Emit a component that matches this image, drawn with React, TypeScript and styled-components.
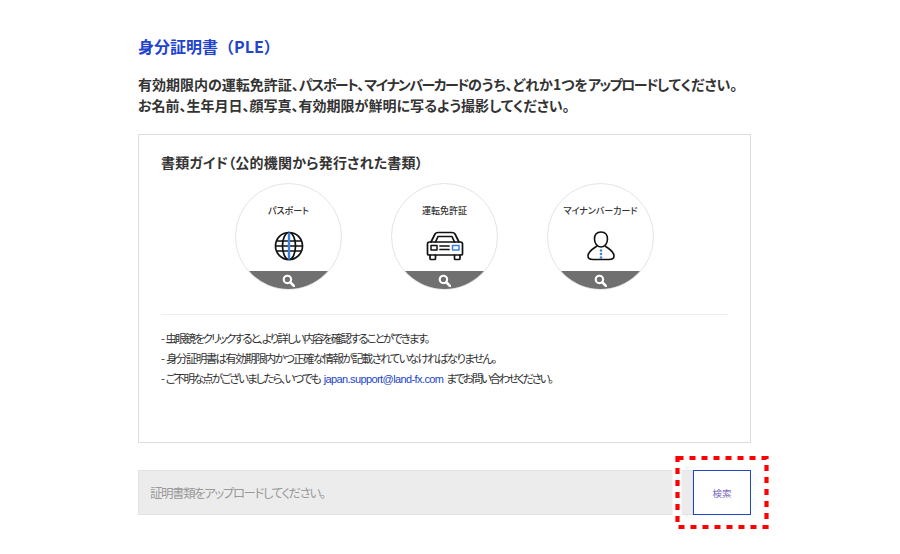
import React from "react";
import styled, { createGlobalStyle } from "styled-components";

const Global = createGlobalStyle`
  html, body { margin: 0; padding: 0; background: #fff; }
  body {
    font-family: "Noto Sans CJK JP", "Noto Sans", sans-serif;
    font-feature-settings: "palt";
  }
`;

const Page = styled.main`
  position: relative;
  width: 900px;
  height: 554px;
  box-sizing: border-box;
  padding: 35px 149px 0 138px;
  overflow: hidden;
`;
const Title = styled.h1`
  margin: 0;
  font-size: 16px;
  line-height: 23px;
  font-weight: 700;
  color: #2244cc;
  font-feature-settings: normal;
`;
const Lead = styled.p`
  margin: 16px 0 0;
  font-size: 14px;
  line-height: 21px;
  font-weight: 700;
  color: #333;
  white-space: nowrap;
`;
const Kata = styled.span`
  letter-spacing: -1.5px;
`;
const GuideBox = styled.section`
  margin-top: 18px;
  height: 309px;
  box-sizing: border-box;
  border: 1px solid #ddd;
  padding: 16px 22px 0;
`;
const GuideTitle = styled.h2`
  margin: 0;
  font-size: 14px;
  line-height: 22px;
  font-weight: 700;
  letter-spacing: 0.2px;
  color: #333;
`;
const Circles = styled.div`
  display: flex;
  justify-content: center;
  gap: 49px;
  margin-top: 10px;
  padding-bottom: 24px;
  border-bottom: 1px solid #eee;
`;
const Circle = styled.div`
  position: relative;
  width: 107px;
  height: 107px;
  box-sizing: border-box;
  border: 1px solid #e4e4e4;
  border-radius: 50%;
  overflow: hidden;
  display: flex;
  flex-direction: column;
  align-items: center;
`;
const CircleLabel = styled.span`
  margin-top: 20px;
  font-size: 9px;
  line-height: 14px;
  font-weight: 500;
  color: #333;
  white-space: nowrap;
`;
const IconWrap = styled.div`
  margin-top: 12px;
  height: 32px;
  display: flex;
  align-items: center;
  justify-content: center;
`;
const Band = styled.div`
  margin-top: auto;
  width: 100%;
  height: 18px;
  flex: none;
  background: #707070;
  display: flex;
  align-items: flex-start;
  justify-content: center;
  padding-top: 3px;
  box-sizing: border-box;
`;
const Notes = styled.ul`
  list-style: none;
  margin: 13px 0 0;
  padding: 0;
  font-size: 11.5px;
  line-height: 20px;
  color: #333;
  word-spacing: 2px;
  white-space: nowrap;
`;
const Note = styled.li<{ $spacing: number }>`
  letter-spacing: ${(p) => p.$spacing}px;
`;
const Mail = styled.span`
  color: #2244cc;
  font-family: "Liberation Sans", sans-serif;
  font-size: 11px;
  letter-spacing: -0.6px;
  margin: 0 3px 0 4px;
`;
const Tail = styled.span`
  letter-spacing: -2.3px;
`;
const UploadRow = styled.div`
  display: flex;
  align-items: stretch;
  margin-top: 27px;
  height: 45px;
`;
const Placeholder = styled.div`
  flex: 1;
  box-sizing: border-box;
  background: #ececec;
  border: 1px solid #e2e2e2;
  padding-left: 11px;
  font-size: 12.5px;
  line-height: 43px;
  color: #999;
  letter-spacing: -1.45px;
`;
const SearchButton = styled.button`
  width: 58px;
  box-sizing: border-box;
  background: #fff;
  border: 1px solid #2244cc;
  padding: 0;
  font-family: inherit;
  font-size: 9.5px;
  color: #7a6cc0;
`;
const Annotation = styled.svg`
  position: absolute;
  left: 670px;
  top: 450px;
`;

const Magnifier = () => (
  <svg width="13" height="13" viewBox="0 0 12 12" fill="none">
    <circle cx="5" cy="5" r="3.4" stroke="#fff" strokeWidth="2" />
    <path d="M7.6 7.6 L11 11" stroke="#fff" strokeWidth="2.4" strokeLinecap="round" />
  </svg>
);

const Globe = () => (
  <svg width="30" height="30" viewBox="0 0 30 30" fill="none" stroke="#111" strokeWidth="1.7">
    <circle cx="15" cy="15" r="13.5" />
    <ellipse cx="15" cy="15" rx="6.5" ry="13.5" />
    <path d="M2 10 H28 M2 20 H28 M1.5 15 H28.5" />
    <path d="M15 1.5 V28.5" stroke="#3b82e0" strokeWidth="2.4" />
  </svg>
);

const Car = () => (
  <svg width="38" height="30" viewBox="0 0 38 30" fill="none" stroke="#111" strokeWidth="1.7" strokeLinejoin="round" strokeLinecap="round">
    <path d="M5 11 L9 3 Q10 1.5 12 1.5 H26 Q28 1.5 29 3 L33 11" />
    <path d="M9.5 11 L12 5.5 H26 L28.5 11" />
    <path d="M3.5 11 H34.5 Q36.5 11 36.5 13 V23 Q36.5 24 35 24 H3 Q1.5 24 1.5 23 V13 Q1.5 11 3.5 11 Z" />
    <path d="M4 24 V27.5 Q4 28.5 5 28.5 H8.5 Q9.5 28.5 9.5 27.5 V24 M28.5 24 V27.5 Q28.5 28.5 29.5 28.5 H33 Q34 28.5 34 27.5 V24" />
    <rect x="5" y="14.5" width="6" height="4.5" strokeWidth="1.5" />
    <path d="M14 15 H23 M14 18.5 H23" />
    <rect x="26.5" y="14.5" width="6.5" height="4.5" stroke="#3b82e0" strokeWidth="1.5" />
  </svg>
);

const Person = () => (
  <svg width="28" height="30" viewBox="0 0 28 30" fill="none" stroke="#111" strokeWidth="1.6" strokeLinejoin="round">
    <path d="M14 1 C9.5 1 7.5 4 7.5 8 C7.5 12 10 16 14 16 C18 16 20.5 12 20.5 8 C20.5 4 18.5 1 14 1 Z" />
    <path d="M10 15 C6 18 1 20 1 25 C1 27.5 3 28.5 6 28.5 H22 C25 28.5 27 27.5 27 25 C27 20 22 18 18 15" />
    <g fill="#3b82e0" stroke="none">
      <circle cx="14" cy="19.5" r="1.3" />
      <circle cx="14" cy="23" r="1.3" />
      <circle cx="14" cy="26.5" r="1.3" />
    </g>
  </svg>
);

const guides = [
  { label: "パスポート", icon: <Globe /> },
  { label: "運転免許証", icon: <Car /> },
  { label: "マイナンバーカード", icon: <Person /> },
];

export default function App() {
  return (
    <Page>
      <Global />
      <Title>身分証明書（PLE）</Title>
      <Lead>
        有効期限内の運転免許証、<Kata>パスポート</Kata>、<Kata>マイナンバーカード</Kata>のうち、どれか1つを<Kata>アップロード</Kata>してください。
        <br />
        お名前、生年月日、顔写真、有効期限が鮮明に写るよう撮影してください。
      </Lead>
      <GuideBox>
        <GuideTitle>書類ガイド（公的機関から発行された書類）</GuideTitle>
        <Circles>
          {guides.map((g) => (
            <Circle key={g.label}>
              <CircleLabel>{g.label}</CircleLabel>
              <IconWrap>{g.icon}</IconWrap>
              <Band>
                <Magnifier />
              </Band>
            </Circle>
          ))}
        </Circles>
        <Notes>
          <Note $spacing={-2}>- 虫眼鏡をクリックすると、より詳しい内容を確認することができます。</Note>
          <Note $spacing={-1.65}>- 身分証明書は有効期限内かつ正確な情報が記載されていなければなりません。</Note>
          <Note $spacing={-1.95}>
            - ご不明な点がございましたら、いつでも<Mail>japan.support@land-fx.com</Mail>
            <Tail>までお問い合わせください。</Tail>
          </Note>
        </Notes>
      </GuideBox>
      <UploadRow>
        <Placeholder>証明書類をアップロードしてください。</Placeholder>
        <SearchButton type="button">検索</SearchButton>
      </UploadRow>
      <Annotation width="104" height="84" viewBox="0 0 104 84" fill="none">
        <path d="M7 20 V65" stroke="#fff" strokeWidth="9" />
        <rect x="7.5" y="8" width="89" height="69" stroke="#f00" strokeWidth="4.2" strokeDasharray="6 6" />
      </Annotation>
    </Page>
  );
}
